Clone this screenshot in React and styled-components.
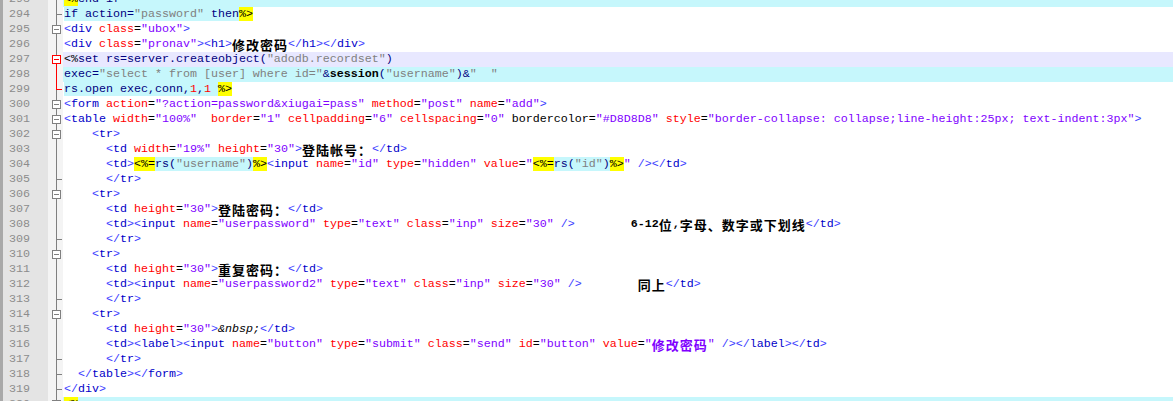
import React from 'react';
import styled, {createGlobalStyle, css} from 'styled-components';

const GlobalStyle = createGlobalStyle`
  html, body {
    margin: 0;
    padding: 0;
    background: #fff;
    overflow: hidden;
  }
`;

const ASP_BG = '#c6f7fc';
const CURRENT_BG = '#e8e8ff';

const Editor = styled.div`
  display: flex;
  flex-direction: column;
  margin-top: -8px;
  width: 1173px;
  font-family: 'Liberation Mono', 'Courier New', monospace;
  font-size: 11.6667px;
`;

const Line = styled.div`
  display: flex;
  height: 15px;
  line-height: 15px;
`;

const LineNo = styled.div`
  box-sizing: border-box;
  width: 48px;
  flex: none;
  padding-left: 6px;
  border-left: 3px solid #a9a9a9;
  background: #e4e4e4;
  color: #8c8c8c;
`;

const FoldCell = styled.div`
  width: 15px;
  flex: none;
  background: #f4f4f4;
  svg {
    display: block;
  }
`;

const Code = styled.div`
  flex: 1;
  padding-left: 1px;
  white-space: pre;
  color: #000;
  background: ${p => (p.$bg === 'asp' ? ASP_BG : p.$bg === 'current' ? CURRENT_BG : '#fff')};
  ${p => p.$bg === 'current' && css`
    span {
      background: transparent;
    }
  `}
`;

const tokStyles = {
  b: 'color:#3a3aff;',
  t: 'color:#0000c8;',
  a: 'color:#ff0000;',
  ua: 'color:#000000;',
  e: 'color:#000000;',
  s: 'color:#8000ff;',
  p: '',
  x: 'color:#000000;font-weight:700;',
  ent: 'color:#000000;font-style:italic;',
  ad: 'color:#000000;background:#ffff00;',
  v: `color:#000080;background:${ASP_BG};`,
  vs: `color:#808080;background:${ASP_BG};`,
  vn: `color:#ff0000;background:${ASP_BG};`,
  vk: `color:#000000;font-weight:700;background:${ASP_BG};`,
};

const Tok = styled.span`
  ${p => tokStyles[p.$k]}
`;

const Cjk = styled.span`
  display: inline-block;
  height: 15px;
  line-height: 15px;
  vertical-align: top;
  font-family: 'Noto Sans CJK SC', sans-serif;
  font-size: 13px;
  font-weight: 700;
  letter-spacing: 1px;
`;

// tiny html highlighter, enough for the lines below
function html(src) {
  const out = [];
  let i = 0;
  while (i < src.length) {
    if (src[i] === '<') {
      let j = i + 1;
      if (src[j] === '/') j++;
      out.push(['b', src.slice(i, j)]);
      let k = j;
      while (k < src.length && /[a-zA-Z0-9]/.test(src[k])) k++;
      out.push(['t', src.slice(j, k)]);
      i = k;
      while (i < src.length && src[i] !== '>' && !(src[i] === '/' && src[i + 1] === '>')) {
        const c = src[i];
        if (c === ' ') {
          let k2 = i;
          while (src[k2] === ' ') k2++;
          out.push(['p', src.slice(i, k2)]);
          i = k2;
        } else if (c === '=') {
          out.push(['e', '=']);
          i++;
        } else if (c === '"') {
          const end = src.indexOf('"', i + 1);
          out.push(['s', src.slice(i, end + 1)]);
          i = end + 1;
        } else {
          let k2 = i;
          while (k2 < src.length && /[a-zA-Z\-]/.test(src[k2])) k2++;
          if (k2 === i) k2 = i + 1;
          const name = src.slice(i, k2);
          out.push([name === 'bordercolor' ? 'ua' : 'a', name]);
          i = k2;
        }
      }
      if (src[i] === '/') {
        out.push(['b', '/>']);
        i += 2;
      } else if (src[i] === '>') {
        out.push(['b', '>']);
        i++;
      }
    } else if (src[i] === '&') {
      const end = src.indexOf(';', i);
      out.push(['ent', src.slice(i, end + 1)]);
      i = end + 1;
    } else {
      let k = i;
      while (k < src.length && src[k] !== '<' && src[k] !== '&') k++;
      out.push(['x', src.slice(i, k)]);
      i = k;
    }
  }
  return out;
}

const splitCjk = text =>
  text.split(/([\u3000-\u9fff\uff00-\uffef]+)/).map((part, i) =>
    i % 2 ? <Cjk key={i}>{part}</Cjk> : part
  );

const G = '#808080';
const R = '#ff0000';

// fold margin marks: box (block start), line (inside), tick (block end)
const FoldMark = ({kind, color = G}) => (
  <svg width="15" height="15" viewBox="0 0 15 15">
    {kind === 'line' && <line x1="8.5" y1="0" x2="8.5" y2="15" stroke={color}/>}
    {kind === 'tick' && (
      <>
        <line x1="8.5" y1="0" x2="8.5" y2="8" stroke={color}/>
        <line x1="8" y1="7.5" x2="14" y2="7.5" stroke={color}/>
        <line x1="8.5" y1="8" x2="8.5" y2="15" stroke={G}/>
      </>
    )}
    {kind === 'box' && (
      <>
        <line x1="8.5" y1="0" x2="8.5" y2="3" stroke={G}/>
        <rect x="4.5" y="3.5" width="8" height="8" fill="#fff" stroke={color}/>
        <line x1="6" y1="7.5" x2="11" y2="7.5" stroke={color}/>
        <line x1="8.5" y1="12" x2="8.5" y2="15" stroke={color}/>
      </>
    )}
  </svg>
);

const lines = [
  {n: 293, fold: 'line', bg: 'asp', toks: [['ad', '<%'], ['v', 'end if']]},
  {n: 294, fold: 'tick', toks: [['v', 'if action='], ['vs', '"password"'], ['v', ' then'], ['ad', '%>']]},
  {n: 295, fold: 'box', toks: html('<div class="ubox">')},
  {n: 296, fold: 'line', toks: html('<div class="pronav"><h1>修改密码</h1></div>')},
  {
    n: 297, fold: 'box', color: R, bg: 'current',
    toks: [['ad', '<%'], ['v', 'set rs=server.createobject('], ['vs', '"adodb.recordset"'], ['v', ')']],
  },
  {
    n: 298, fold: 'line', color: R, bg: 'asp',
    toks: [['v', 'exec='], ['vs', '"select * from [user] where id="'], ['v', '&'], ['vk', 'session'],
      ['v', '('], ['vs', '"username"'], ['v', ')&'], ['vs', '"  "']],
  },
  {
    n: 299, fold: 'tick', color: R,
    toks: [['v', 'rs.open exec,conn,'], ['vn', '1'], ['v', ','], ['vn', '1'], ['v', ' '], ['ad', '%>']],
  },
  {n: 300, fold: 'box', toks: html('<form action="?action=password&xiugai=pass" method="post" name="add">')},
  {
    n: 301, fold: 'box',
    toks: html('<table width="100%"  border="1" cellpadding="6" cellspacing="0" bordercolor="#D8D8D8" style="border-collapse: collapse;line-height:25px; text-indent:3px">'),
  },
  {n: 302, fold: 'box', toks: html('    <tr>')},
  {n: 303, fold: 'line', toks: html('      <td width="19%" height="30">登陆帐号：</td>')},
  {
    n: 304, fold: 'line',
    toks: [
      ...html('      <td>'),
      ['ad', '<%='], ['v', 'rs('], ['vs', '"username"'], ['v', ')'], ['ad', '%>'],
      ...html('<input name="id" type="hidden" value='),
      ['s', '"'], ['ad', '<%='], ['v', 'rs('], ['vs', '"id"'], ['v', ')'], ['ad', '%>'], ['s', '"'],
      ['p', ' '], ['b', '/>'],
      ...html('</td>'),
    ],
  },
  {n: 305, fold: 'tick', toks: html('      </tr>')},
  {n: 306, fold: 'box', toks: html('    <tr>')},
  {n: 307, fold: 'line', toks: html('      <td height="30">登陆密码：</td>')},
  {
    n: 308, fold: 'line',
    toks: html('      <td><input name="userpassword" type="text" class="inp" size="30" />        6-12位,字母、数字或下划线</td>'),
  },
  {n: 309, fold: 'tick', toks: html('      </tr>')},
  {n: 310, fold: 'box', toks: html('    <tr>')},
  {n: 311, fold: 'line', toks: html('      <td height="30">重复密码：</td>')},
  {
    n: 312, fold: 'line',
    toks: html('      <td><input name="userpassword2" type="text" class="inp" size="30" />        同上</td>'),
  },
  {n: 313, fold: 'tick', toks: html('      </tr>')},
  {n: 314, fold: 'box', toks: html('    <tr>')},
  {n: 315, fold: 'line', toks: html('      <td height="30">&nbsp;</td>')},
  {
    n: 316, fold: 'line',
    toks: html('      <td><label><input name="button" type="submit" class="send" id="button" value="修改密码" /></label></td>'),
  },
  {n: 317, fold: 'tick', toks: html('      </tr>')},
  {n: 318, fold: 'tick', toks: html('  </table></form>')},
  {n: 319, fold: 'tick', toks: html('</div>')},
  {n: 320, fold: 'box', bg: 'asp', toks: [['ad', '<%']]},
];

export default function App() {
  return (
    <>
      <GlobalStyle/>
      <Editor>
        {lines.map(l => (
          <Line key={l.n}>
            <LineNo>{l.n}</LineNo>
            <FoldCell>
              <FoldMark kind={l.fold} color={l.color}/>
            </FoldCell>
            <Code $bg={l.bg}>
              {l.toks.map(([k, text], i) => (
                <Tok key={i} $k={k}>{splitCjk(text)}</Tok>
              ))}
            </Code>
          </Line>
        ))}
      </Editor>
    </>
  );
}
